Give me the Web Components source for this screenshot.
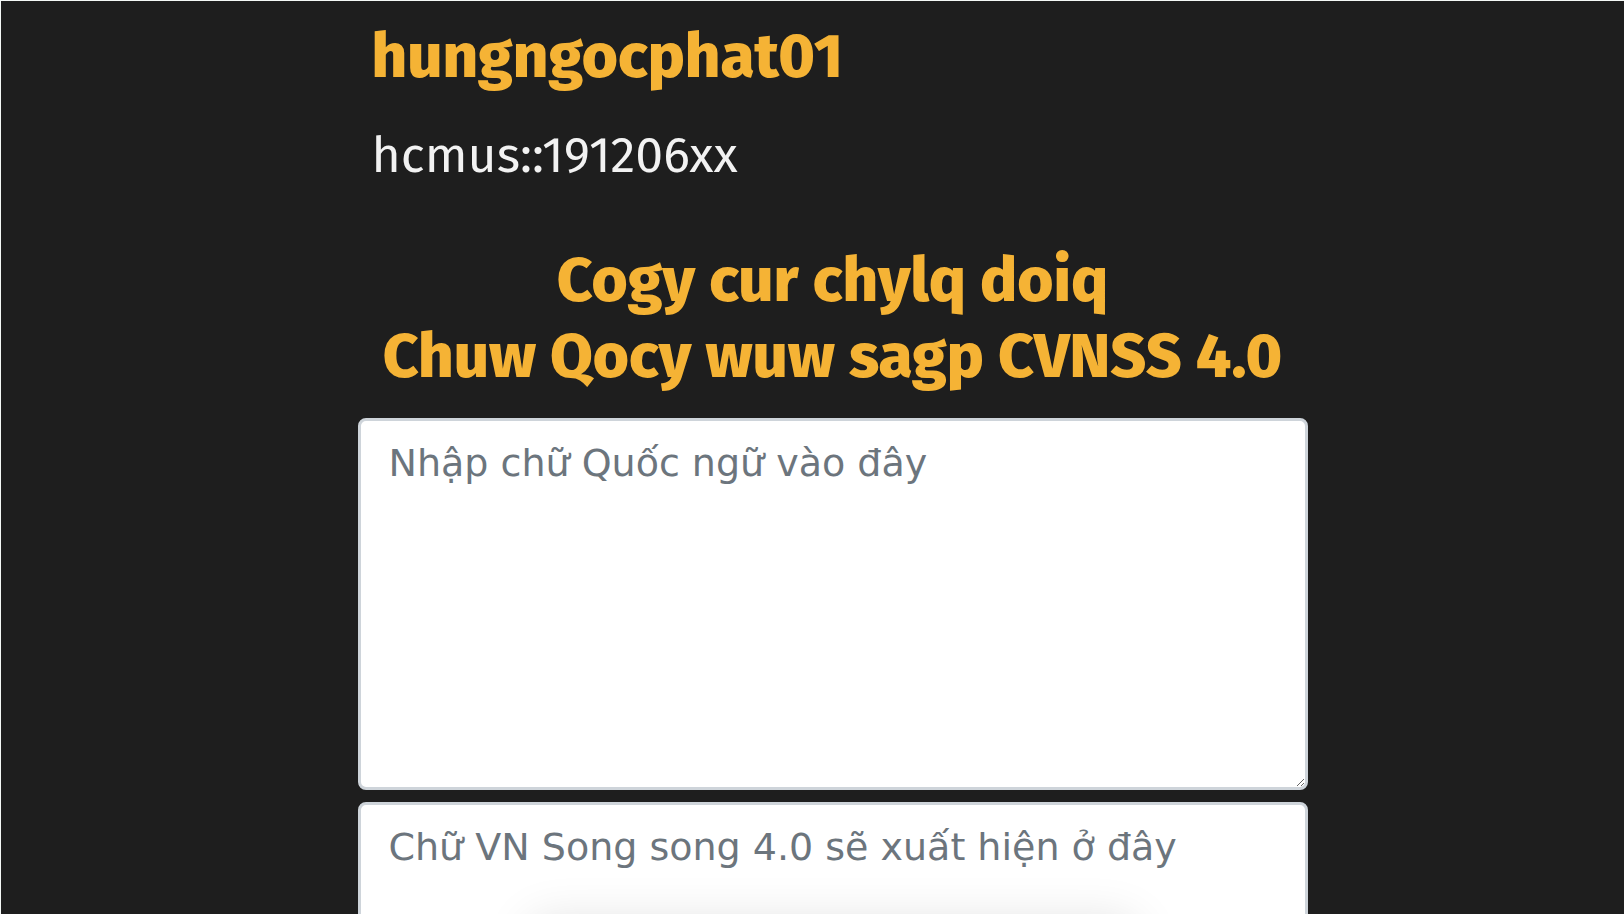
<!DOCTYPE html>
<html lang="vi">
<head>
<meta charset="utf-8">
<meta name="viewport" content="width=device-width, initial-scale=1">
<title>CVNSS 4.0</title>
<style>
  html { background: #1e1e1e; scrollbar-width: none; }
  body {
    margin: 0;
    border-top: 1px solid #f4f8f6;
    border-left: 1px solid #f4f8f6;
    background: #1e1e1e;
    color: #f2f2f2;
    font-family: "Fira Sans", Roboto, "Noto Sans", sans-serif;
  }
</style>
</head>
<body>
<cv-page>
  <cv-profile slot="header" name="hungngocphat01" detail="hcmus::191206xx"></cv-profile>
  <cv-title>Cogy cur chylq doiq<br>Chuw Qocy wuw sagp CVNSS 4.0</cv-title>
  <cv-field label="Nhập chữ Quốc ngữ vào đây"></cv-field>
  <cv-field label="Chữ VN Song song 4.0 sẽ xuất hiện ở đây" output></cv-field>
</cv-page>
<script>
class CvPage extends HTMLElement {
  constructor() {
    super();
    this.attachShadow({ mode: 'open' }).innerHTML = `
      <style>
        :host { display: block; padding: 17px 0 0 40px; }
        main {
          display: flex;
          flex-direction: column;
          gap: 12px;
          max-width: 950px;
          margin: 0 auto;
        }
        ::slotted(*) { flex: none; }
      </style>
      <main><slot name="header"></slot><slot></slot></main>`;
  }
}

class CvProfile extends HTMLElement {
  constructor() {
    super();
    this.attachShadow({ mode: 'open' }).innerHTML = `
      <style>
        :host { display: block; padding: 0 14px 37px; }
        h2, p { margin: 0; }
        h2 { color: #f5b335; font-size: 62px; line-height: 76px; font-weight: 800; }
        p { margin-top: 23px; font-size: 50px; line-height: 76px; }
      </style>
      <h2></h2><p></p>`;
    this.shadowRoot.querySelector('h2').textContent = this.getAttribute('name');
    this.shadowRoot.querySelector('p').textContent = this.getAttribute('detail');
  }
}

class CvTitle extends HTMLElement {
  constructor() {
    super();
    this.attachShadow({ mode: 'open' }).innerHTML = `
      <style>
        :host { display: block; padding-bottom: 12px; }
        h1 {
          margin: 0;
          color: #f5b335;
          font-size: 62px;
          line-height: 76px;
          font-weight: 800;
          text-align: center;
        }
      </style>
      <h1><slot></slot></h1>`;
  }
}

class CvField extends HTMLElement {
  constructor() {
    super();
    this.attachShadow({ mode: 'open' }).innerHTML = `
      <style>
        :host { display: block; position: relative; }
        textarea {
          display: block;
          width: 100%;
          height: 372px;
          box-sizing: border-box;
          margin: 0;
          padding: 13px 28px;
          border: 3px solid #ced4da;
          border-radius: 8px;
          background: #fff;
          color: #495057;
          font-family: "DejaVu Sans", sans-serif;
          font-size: 38px;
          line-height: 58px;
          resize: vertical;
        }
        textarea::placeholder { color: #6c757d; opacity: 1; }
        /* soft shade cast by the panel below the fold */
        .shade { display: none; }
        :host([output]) .shade {
          display: block;
          position: absolute;
          left: 18%;
          right: 18%;
          top: 118px;
          height: 60px;
          border-radius: 16px;
          box-shadow: 0 0 48px rgba(0, 0, 0, .12);
          pointer-events: none;
        }
      </style>
      <textarea></textarea><div class="shade"></div>`;
    const area = this.shadowRoot.querySelector('textarea');
    area.placeholder = this.getAttribute('label');
    area.setAttribute('aria-label', this.getAttribute('label'));
    area.readOnly = this.hasAttribute('output');
  }
}

customElements.define('cv-page', CvPage);
customElements.define('cv-profile', CvProfile);
customElements.define('cv-title', CvTitle);
customElements.define('cv-field', CvField);
</script>
</body>
</html>
